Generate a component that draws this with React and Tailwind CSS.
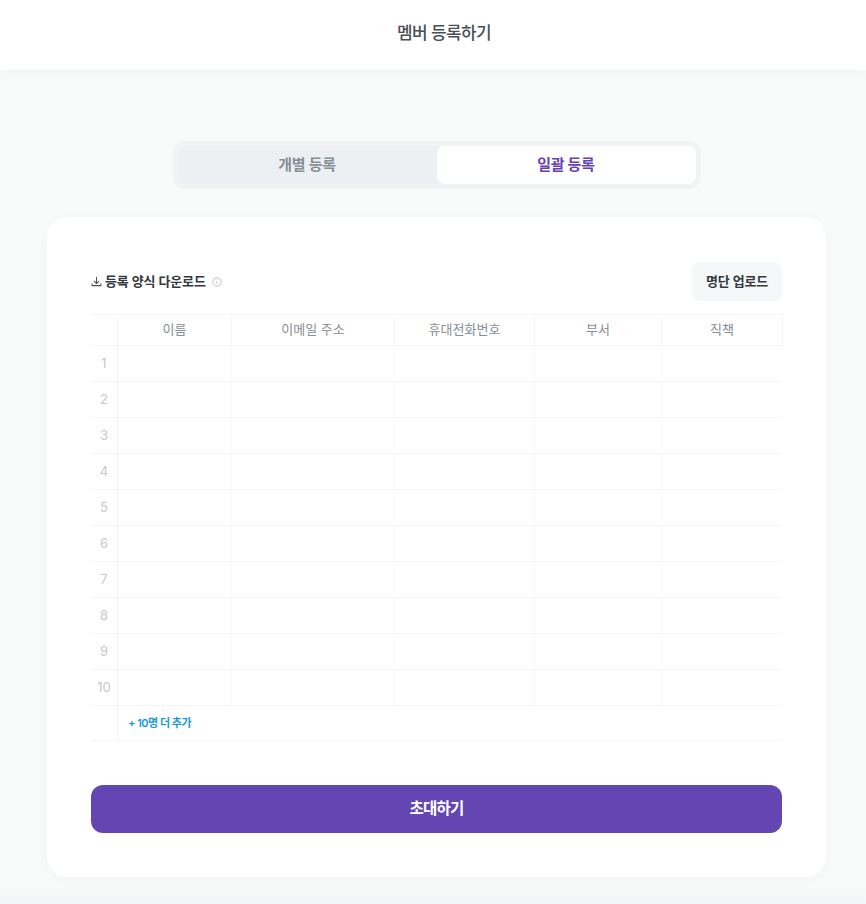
const FONT = '"Inter","Noto Sans CJK KR",sans-serif';
const cols = "grid grid-cols-[27px_114px_163px_140px_127px_120px]";
const heads = ["이름", "이메일 주소", "휴대전화번호", "부서", "직책"];
const rows = [1, 2, 3, 4, 5, 6, 7, 8, 9, 10];

export default function App() {
  return (
    <div className="h-[904px] w-[866px] overflow-hidden bg-[#f9fafa] relative" style={{ fontFamily: FONT }}>
      <header className="flex h-[70px] items-center justify-center bg-white pb-[3px] pl-[22px] shadow-[0_2px_14px_rgba(0,0,0,0.035)]">
        <h1 className="text-[17px] font-medium tracking-[-0.6px] text-[#495057]">멤버 등록하기</h1>
      </header>

      <main className="flex flex-col items-center pl-[7px] pt-[71px]">
        <div className="flex h-[48px] w-[528px] rounded-[12px] border-[5px] border-[#f1f3f5] bg-[#edf0f2]">
          <button className="flex flex-1 items-center justify-center text-[15px] font-semibold tracking-[-0.3px] text-[#868e96]">개별 등록</button>
          <button className="flex w-[259px] items-center justify-center rounded-[8px] bg-white text-[15px] font-bold tracking-[-0.3px] text-[#6741b4]">일괄 등록</button>
        </div>

        <section className="mt-[28px] h-[660px] w-[779px] rounded-[20px] bg-white px-[44px] pt-[45px] shadow-[0_2px_12px_rgba(0,0,0,0.03)]">
          <div className="flex h-[39px] items-center justify-between">
            <div className="flex items-center">
              <svg width="11" height="11" viewBox="0 0 12 12" fill="none" stroke="#495057" strokeWidth="1.1" strokeLinecap="round" strokeLinejoin="round">
                <path d="M6 1.5v6.5M3.5 5.8 6 8.2l2.5-2.4M1.2 8.5v2h9.6v-2" />
              </svg>
              <span className="ml-[3px] text-[13px] font-semibold tracking-[-0.15px] text-[#343a40]">등록 양식 다운로드</span>
              <svg className="ml-[6px]" width="10" height="10" viewBox="0 0 10 10" fill="none" stroke="#adb5bd" strokeWidth="0.8">
                <circle cx="5" cy="5" r="4.2" />
                <path d="M5 4.4v2.8M5 2.6v.8" />
              </svg>
            </div>
            <button className="h-[39px] w-[90px] rounded-[8px] bg-[#f5f7f8] text-[13px] font-semibold tracking-[-0.15px] text-[#343a40]">명단 업로드</button>
          </div>

          <div className="mt-[13px] w-[691px]">
            <div className={`${cols} h-[32px] w-[692px] border-y border-r border-[#f3f4f6]`}>
              <div className="border-r border-[#f3f4f6]" />
              {heads.map((h, i) => (
                <div key={h} className={`flex items-center justify-center text-[13px] text-[#868e96] ${i < 4 ? "border-r border-[#f3f4f6]" : ""}`}>{h}</div>
              ))}
            </div>
            {rows.map((n) => (
              <div key={n} className={`${cols} h-[36px] border-b border-[#f3f4f6]`}>
                <div className="flex items-center justify-center border-r border-[#f3f4f6] text-[13px] text-[#c6c8ca]">{n}</div>
                {heads.map((h, i) => (
                  <div key={h} className={i < 4 ? "border-r border-[#f6f7f8]" : ""} />
                ))}
              </div>
            ))}
            <div className="flex h-[35px] border-b border-[#f3f4f6]">
              <div className="w-[27px] border-r border-[#f3f4f6]" />
              <button className="ml-[10px] text-[11px] font-semibold tracking-[-0.5px] text-[#1c9ad6]">+ 10명 더 추가</button>
            </div>
          </div>

          <button className="mt-[44px] h-[48px] w-[691px] rounded-[12px] bg-[#6446b2] pb-[1px] text-[15.5px] font-bold tracking-[-0.8px] text-white">초대하기</button>
        </section>
      </main>
      <div className="absolute bottom-0 left-0 h-[16px] w-full bg-gradient-to-b from-[#f9fafa] to-[#f3f4f5]" />
    </div>
  );
}
